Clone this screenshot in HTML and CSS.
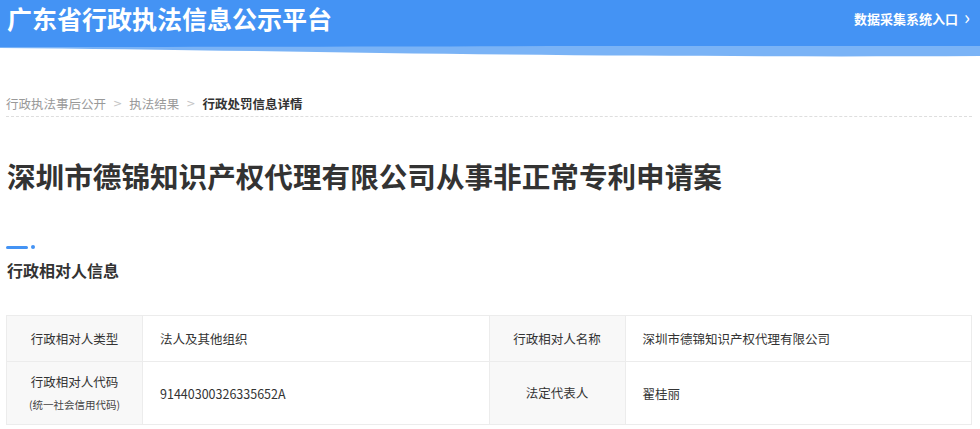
FILE: index.html
```html
<!DOCTYPE html>
<html lang="zh-CN">
<head>
  <meta charset="UTF-8" />
  <meta name="viewport" content="width=device-width, initial-scale=1.0">
  <title>广东省行政执法信息公示平台</title>
  <link rel="stylesheet" href="styles.css">
</head>
<body>
  <div class="header">
    <div class="header-bar">
      <h1>广东省行政执法信息公示平台</h1>
      <a class="entry" href="#">数据采集系统入口 <span class="chev">&#x203A;</span></a>
    </div>
    <svg class="wave" viewBox="0 0 980 12" preserveAspectRatio="none">
      <path d="M0 0 L980 0 L980 10 C800 11 600 10 380 7 C250 5 120 3 0 2 Z" fill="#7ab3f6"/>
      <path d="M0 0 L980 0 L980 0 C700 -1 400 1 0 1 Z" fill="#4493f4"/>
    </svg>
  </div>

  <div class="page">
    <div class="crumbs">
      <span class="crumb">行政执法事后公开</span>
      <span class="sep">&gt;</span>
      <span class="crumb">执法结果</span>
      <span class="sep">&gt;</span>
      <span class="crumb current">行政处罚信息详情</span>
    </div>

    <h2 class="case-title">深圳市德锦知识产权代理有限公司从事非正常专利申请案</h2>

    <div class="section-mark"><span class="bar"></span><span class="dot"></span></div>
    <h3 class="section-title">行政相对人信息</h3>

    <table class="info">
      <tr>
        <td class="label">行政相对人类型</td>
        <td class="value">法人及其他组织</td>
        <td class="label">行政相对人名称</td>
        <td class="value">深圳市德锦知识产权代理有限公司</td>
      </tr>
      <tr class="tall">
        <td class="label">行政相对人代码<br><small>(统一社会信用代码)</small></td>
        <td class="value">91440300326335652A</td>
        <td class="label">法定代表人</td>
        <td class="value">翟桂丽</td>
      </tr>
    </table>
  </div>
</body>
</html>
```

FILE: styles.css
```css
body {
  margin: 0;
  font-family: "Noto Sans CJK SC", "Liberation Sans", sans-serif;
  color: #333;
  background: #fff;
}
.header-bar {
  background: #4493f4;
  height: 46px;
  display: flex;
  align-items: center;
  justify-content: space-between;
  padding: 0 10px 0 7px;
}
.header-bar h1 {
  margin: 0;
  color: #fff;
  font-size: 25px;
  font-weight: bold;
  line-height: 1;
  margin-top: -10px;
}
.entry {
  color: #fff;
  font-size: 13px;
  font-weight: bold;
  text-decoration: none;
  margin-top: -10px;
  display: flex;
  align-items: center;
  gap: 6px;
}
.chev {
  font-size: 20px;
  font-weight: normal;
  line-height: 1;
  margin-top: -3px;
}
.wave {
  display: block;
  width: 100%;
  height: 12px;
}
.page {
  padding: 0 8px 0 6px;
}
.crumbs {
  margin-top: 37px;
  height: 21px;
  border-bottom: 1px dashed #dedede;
  font-size: 12.5px;
  display: flex;
  align-items: flex-start;
  line-height: 17px;
}
.crumb {
  color: #999;
}
.crumb.current {
  color: #333;
  font-weight: bold;
}
.sep {
  color: #c4c4c4;
  margin: 0 7px;
  font-family: "DejaVu Sans", sans-serif;
  font-size: 11px;
}
.case-title {
  margin: 39px 0 0 1px;
  font-size: 28.6px;
  font-weight: bold;
  line-height: 40px;
  color: #333;
}
.section-mark {
  margin-top: 49px;
  display: flex;
  align-items: center;
  gap: 3px;
  height: 4px;
}
.section-mark .bar {
  width: 22px;
  height: 3px;
  border-radius: 2px;
  background: #4493f4;
}
.section-mark .dot {
  width: 4px;
  height: 4px;
  border-radius: 50%;
  background: #4493f4;
}
.section-title {
  margin: 10px 0 0 1px;
  font-size: 16px;
  font-weight: bold;
  line-height: 22px;
  color: #333;
}
.info {
  margin-top: 34px;
  width: 100%;
  border-collapse: collapse;
  font-size: 12.5px;
  table-layout: fixed;
}
.info td {
  border: 1px solid #ececec;
  height: 45px;
  padding: 0;
}
.info tr.tall td {
  height: 62px;
}
.info td.label {
  background: #f8f8f8;
  text-align: center;
  width: 135px;
  line-height: 22px;
}
.info td.value {
  padding-left: 17px;
}
.info small {
  font-size: 10.5px;
  color: #444;
}
```
